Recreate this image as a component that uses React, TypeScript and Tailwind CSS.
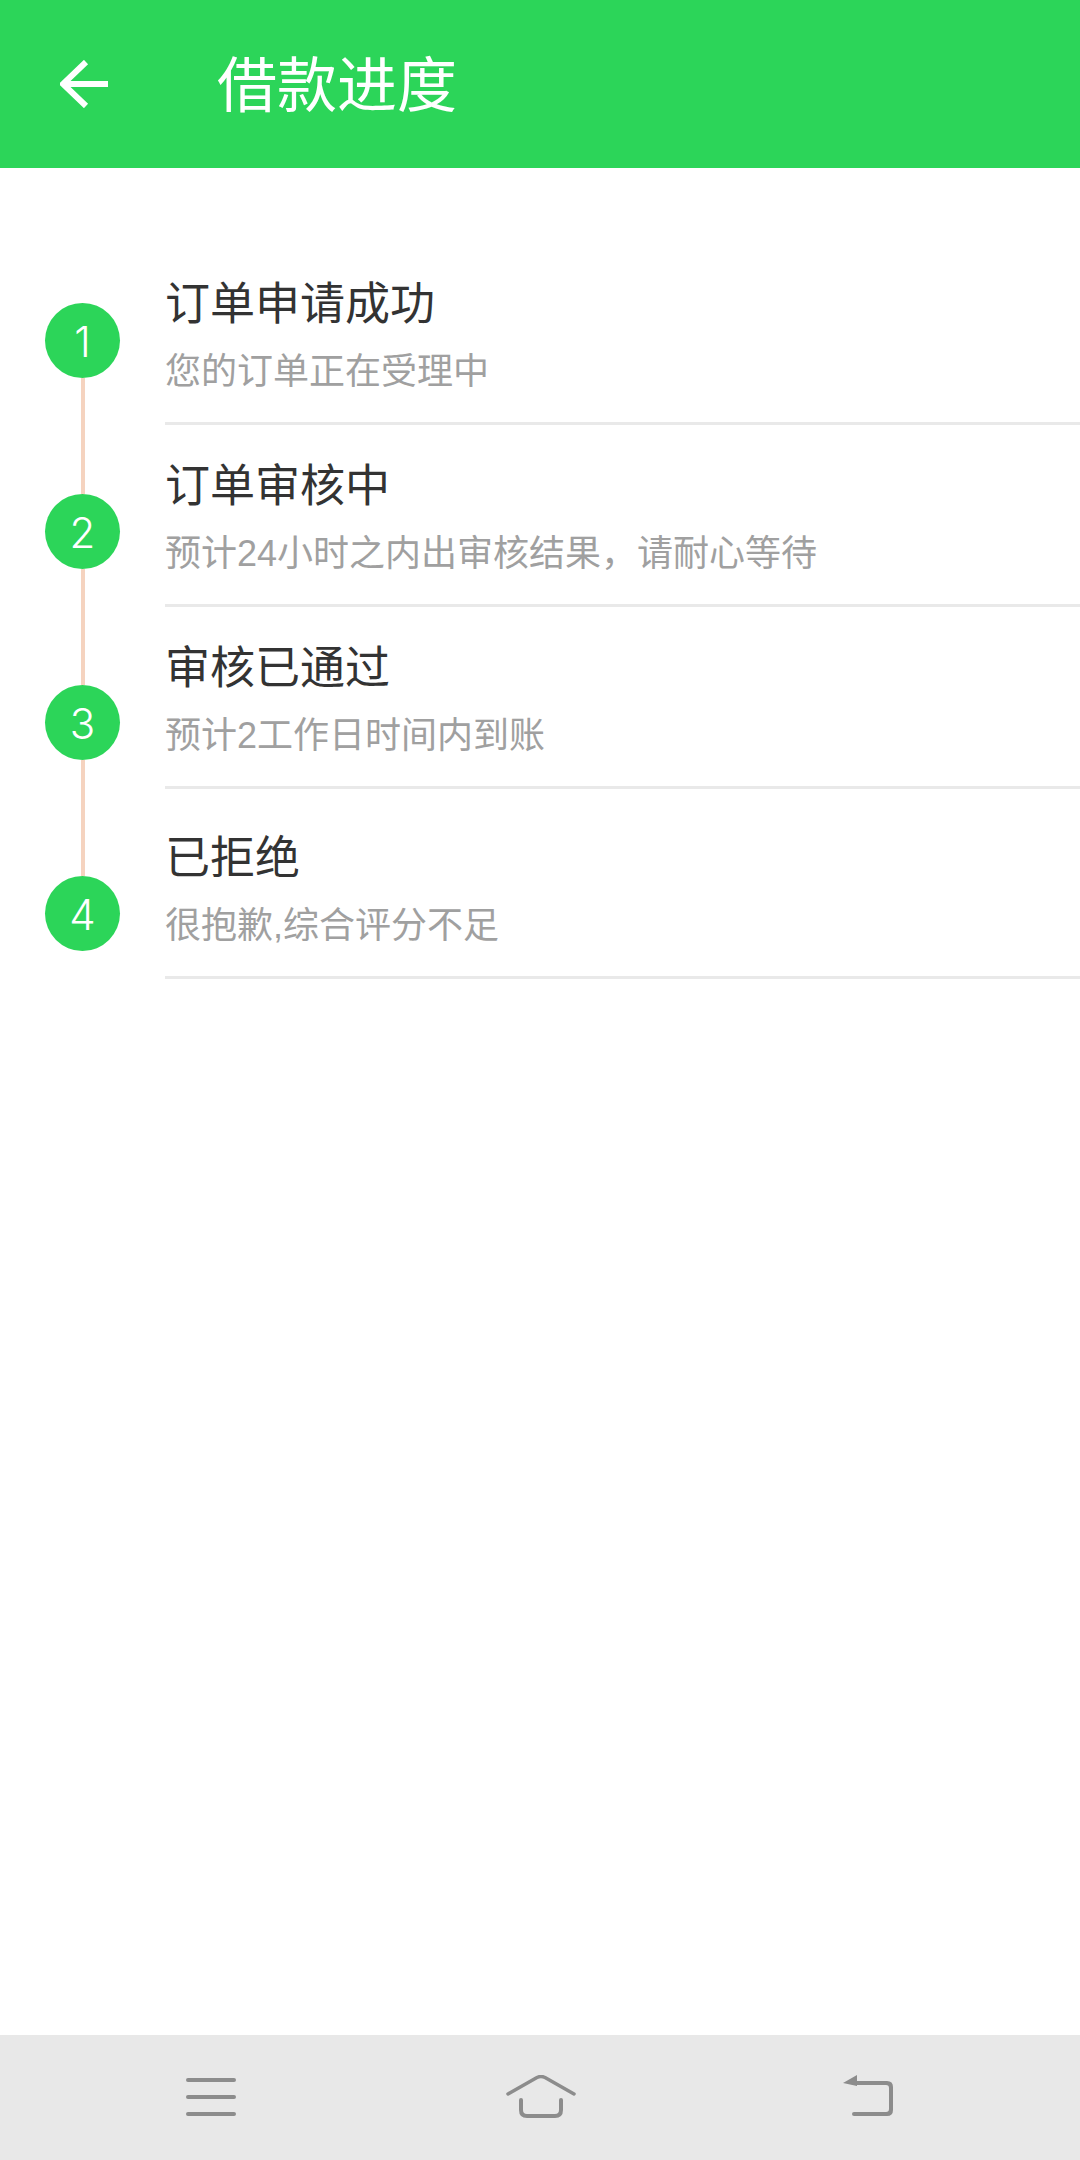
const cjk = "font-['Roboto','Noto_Sans_CJK_SC',sans-serif]";
const subFont = "font-['Liberation_Sans','Noto_Sans_CJK_SC',sans-serif]";

const steps = [
  { n: 1, title: "订单申请成功", sub: "您的订单正在受理中", pad: "pt-[32px] pb-[25px]" },
  { n: 2, title: "订单审核中", sub: "预计24小时之内出审核结果，请耐心等待", pad: "pt-[32px] pb-[25px]" },
  { n: 3, title: "审核已通过", sub: "预计2工作日时间内到账", pad: "pt-[32px] pb-[25px]" },
  { n: 4, title: "已拒绝", sub: "很抱歉,综合评分不足", pad: "pt-[40px] pb-[25px]" },
];

function Circle({ n }: { n: number }) {
  return (
    <div className="flex h-[75px] w-[75px] items-center justify-center rounded-full bg-[#2cd559] pt-[3px] font-['Inter',sans-serif] text-[42px] font-light leading-none text-white">
      {n}
    </div>
  );
}

export default function App() {
  return (
    <div className={`flex h-[2160px] w-[1080px] flex-col bg-white ${cjk}`}>
      <header className="flex h-[168px] items-center bg-[#2cd559] pl-[60px]">
        <svg width="48" height="48" viewBox="0 0 48 48" fill="none" stroke="white" strokeWidth="6" className="mt-[-1px]">
          <path d="M48 24H4" />
          <path d="M26 2L3 24l23 22" />
        </svg>
        <h1 className="ml-[109px] mt-[6px] text-[60px] font-normal leading-none text-white">借款进度</h1>
      </header>

      <main className="flex flex-1 pt-[75px]">
        <div className="flex w-[165px] shrink-0 flex-col items-center pt-[60px]">
          {steps.map((s, i) => (
            <div key={s.n} className="flex flex-col items-center">
              {i > 0 && <div className="h-[116px] w-[4px] bg-[#f5d3bf]" />}
              <Circle n={s.n} />
            </div>
          ))}
        </div>
        <div className="flex-1">
          {steps.map((s) => (
            <div key={s.n} className={`border-b-[3px] border-[#e9e9e9] ${s.pad}`}>
              <div className="text-[45px] leading-[60px] text-[#333333]">{s.title}</div>
              <div className={`mt-[12px] text-[36px] leading-[50px] text-[#a0a0a0] ${subFont}`}>{s.sub}</div>
            </div>
          ))}
        </div>
      </main>

      <nav className="flex h-[125px] items-start bg-[#e8e8e8] pl-[186px] pt-[40px]">
        <svg width="50" height="44" viewBox="0 0 50 44" fill="none" stroke="#8c8c8c" strokeWidth="4" strokeLinecap="round">
          <path d="M2 5h46M2 22h46M2 39h46" />
        </svg>
        <svg width="70" height="44" viewBox="0 0 70 44" fill="none" stroke="#8c8c8c" strokeLinecap="round" strokeLinejoin="round" className="ml-[270px]">
          <path d="M2 19L31 2.5q4-2 8 0L68 19" strokeWidth="3.5" />
          <path d="M15 25v10q0 6 6 6h28q6 0 6-6V25" strokeWidth="4" />
        </svg>
        <svg width="52" height="44" viewBox="0 0 52 44" fill="#8c8c8c" stroke="none" className="ml-[267px]">
          <path d="M0 8L14 0v6h30q6 0 6 6v23q0 6-6 6H11a2 2 0 0 1 0-4h32q3 0 3-3V13q0-3-3-3H14v1z" />
        </svg>
      </nav>
    </div>
  );
}
